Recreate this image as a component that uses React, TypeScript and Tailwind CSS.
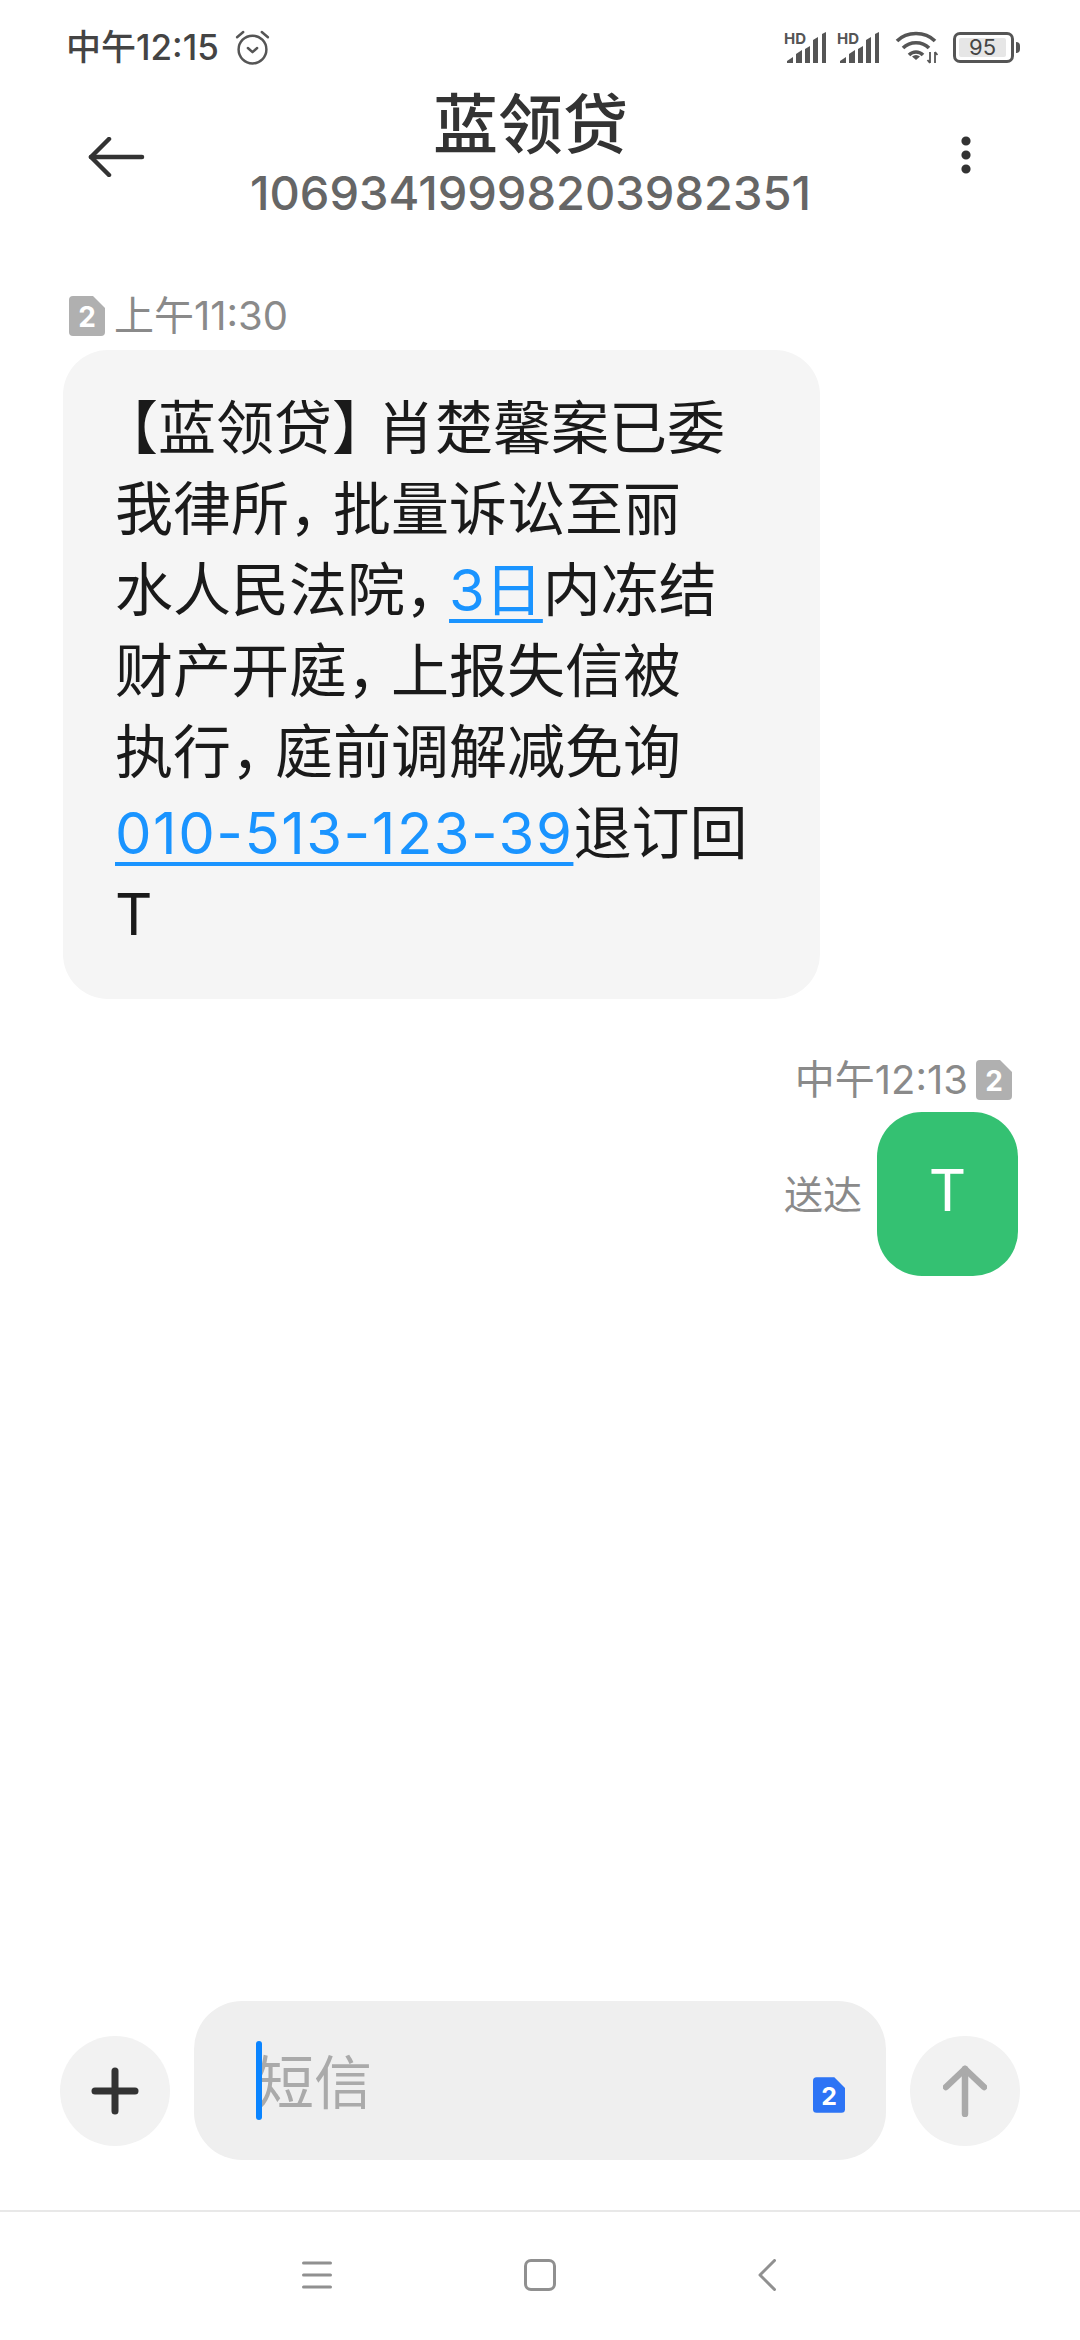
import { MoreVertical } from "lucide-react";

const FONT = "font-['Inter','Noto_Sans_CJK_SC',sans-serif]";

function SimIcon({ color, className }: { color: string; className: string }) {
  return (
    <svg viewBox="0 0 36 40" className={className}>
      <path
        d="M4 0H24L36 12V36a4 4 0 0 1-4 4H4a4 4 0 0 1-4-4V4a4 4 0 0 1 4-4Z"
        fill={color}
      />
      <text x="18" y="31" textAnchor="middle" fontSize="28" fontWeight="700" fill="#fff" fontFamily="Inter, sans-serif">
        2
      </text>
    </svg>
  );
}

function Signal() {
  return (
    <svg viewBox="0 0 41 31" className="h-[31px] w-[41px] overflow-visible">
      <text x="-1" y="12" fontSize="15" fontWeight="700" fill="#555" fontFamily="Inter, sans-serif">
        HD
      </text>
      <path d="M2 31V29L8 25V31Z M11 31V22L17 18V31Z M20 31V17L25 14V31Z M28 31V8L33 5V31Z M37 31V2L41 0V31Z" fill="#555" />
    </svg>
  );
}

function Wifi() {
  return (
    <svg viewBox="0 0 43 34" className="h-[34px] w-[43px]" fill="none" stroke="#555" strokeWidth="3.6">
      <path d="M2 11C12 1 30 1 40 11" />
      <path d="M8 18C15 11 27 11 34 18" />
      <path d="M14 25C18 21 24 21 28 25" />
      <path d="M21 30L17 26.500C19.500 24.500 22.500 24.500 25 26.500Z" fill="#555" stroke="none" />
      <path d="M35 22V33M32.500 30L35 33M40 33V22M40 22L42.500 25" strokeWidth="1.800" />
    </svg>
  );
}

function Battery() {
  return (
    <div className="flex items-center gap-[2px]">
      <div className="h-[31px] w-[61px] rounded-[7px] border-[3.5px] border-[#555] py-[3px] pl-[3px] pr-[5px]">
        <div className="flex h-full w-full items-center justify-center rounded-[2px] bg-[#e6e6e6] text-[22px] leading-none text-[#444]">
          95
        </div>
      </div>
      <div className="h-[11px] w-[4px] rounded-r-full bg-[#555]" />
    </div>
  );
}

function Alarm() {
  return (
    <svg viewBox="0 0 34 34" className="ml-[16px] h-[35px] w-[35px]" fill="none" stroke="#555" strokeWidth="2.400" strokeLinecap="round" strokeLinejoin="round">
      <circle cx="17" cy="19" r="13.500" />
      <path d="M12.500 17.500L17 21.500L21.500 17.500" />
      <path d="M2 7L8 2" />
      <path d="M32 7L26 2" />
    </svg>
  );
}

// the phone's font sets CJK punctuation narrower than a full em
const Comma = () => <span className="mr-[15px] [font-feature-settings:'halt']">，</span>;

export default function App() {
  return (
    <div className={`flex h-[2340px] w-[1080px] flex-col overflow-hidden bg-white ${FONT}`}>
      {/* Status bar */}
      <div className="flex h-[94px] shrink-0 items-center justify-between pl-[66px] pr-[60px]">
        <div className="flex items-center">
          <span className="text-[35px] font-medium leading-none text-[#444]">中午12:15</span>
          <Alarm />
        </div>
        <div className="flex items-center">
          <Signal />
          <div className="ml-[12px]">
            <Signal />
          </div>
          <div className="ml-[16px] mr-[15px]">
            <Wifi />
          </div>
          <Battery />
        </div>
      </div>

      {/* Header */}
      <div className="flex h-[122px] shrink-0 items-center justify-between pl-[88px] pr-[90px]">
        <svg viewBox="0 0 57 40" className="mt-[3px] h-[40px] w-[57px]" fill="none" stroke="#333" strokeWidth="4.500" strokeLinecap="round" strokeLinejoin="round">
          <path d="M3 20H54" />
          <path d="M21 2L3 20L21 38" />
        </svg>
        <div className="mr-[26px] flex flex-col items-center">
          <span className="mt-[-3px] text-[65px] font-medium leading-[72px] text-[#333]">蓝领贷</span>
          <span className="mt-[6px] text-[47px] font-medium leading-[52px] text-[#666]">10693419998203982351</span>
        </div>
        <MoreVertical className="size-[48px] fill-[#333] text-[#333]" strokeWidth={2.6} />
      </div>

      {/* Messages */}
      <div className="flex flex-1 flex-col pl-[63px] pr-[62px] pt-[80px]">
        <div className="flex items-center gap-[9px] pl-[6px]">
          <SimIcon color="#b0b0b0" className="h-[40px] w-[36px]" />
          <span className="text-[40px] leading-[40px] text-[#8a8a8a]">上午11:30</span>
        </div>
        <div className="mt-[14px] w-[757px] rounded-[45px] bg-[#f5f5f5] pb-[44px] pl-[52px] pt-[38px] text-[58px] leading-[81px] text-[#1a1a1a]">
          <p>
            <span className="ml-[14px] [font-feature-settings:'halt']">【</span>蓝领贷
            <span className="mr-[16px] [font-feature-settings:'halt']">】</span>肖楚馨案已委
          </p>
          <p>
            我律所<Comma />批量诉讼至丽
          </p>
          <p>
            水人民法院<Comma />
            <span className="text-[#1a94ff] underline decoration-[4px] underline-offset-[8px]">3日</span>内冻结
          </p>
          <p>
            财产开庭<Comma />上报失信被
          </p>
          <p>
            执行<Comma />庭前调解减免询
          </p>
          <p>
            <span className="tracking-[1.5px] text-[#1a94ff] underline decoration-[4px] underline-offset-[8px]">010-513-123-39</span>退订回
          </p>
          <p>T</p>
        </div>

        <div className="mt-[61px] flex items-center justify-end gap-[8px] pr-[6px]">
          <span className="text-[40px] leading-[40px] text-[#8a8a8a]">中午12:13</span>
          <SimIcon color="#b0b0b0" className="h-[40px] w-[36px]" />
        </div>
        <div className="mt-[12px] flex items-center justify-end gap-[15px]">
          <span className="text-[39px] leading-none text-[#8a8a8a]">送达</span>
          <div className="flex h-[164px] w-[141px] items-center justify-center rounded-[45px] bg-[#34c172] pb-[8px] text-[58px] leading-none text-white">
            T
          </div>
        </div>
      </div>

      {/* Input row */}
      <div className="flex shrink-0 items-end gap-[24px] pl-[60px]">
        <button className="mb-[14px] grid size-[110px] place-items-center rounded-full bg-[#f2f2f2]">
          <svg viewBox="0 0 48 48" className="size-[48px]" stroke="#333" strokeWidth="7" strokeLinecap="round">
            <path d="M24 4V44" />
            <path d="M4 24H44" />
          </svg>
        </button>
        <div className="relative flex h-[159px] w-[692px] items-center rounded-[48px] bg-[#efefef] pl-[62px] pt-[4px]">
          <div className="absolute left-[62px] top-[40px] h-[79px] w-[6px] rounded-full bg-[#0a84ff]" />
          <span className="text-[58px] leading-none text-[#aaa]">短信</span>
          <SimIcon color="#2d74f5" className="absolute left-[619px] top-[76px] h-[36px] w-[32px]" />
        </div>
        <button className="mb-[14px] grid size-[110px] place-items-center rounded-full bg-[#f2f2f2]">
          <svg viewBox="0 0 44 52" className="h-[52px] w-[44px]" fill="none" stroke="#aaa" strokeWidth="6.500" strokeLinecap="round" strokeLinejoin="round">
            <path d="M22 4V49" />
            <path d="M3 22L22 4L41 22" />
          </svg>
        </button>
      </div>

      {/* Nav bar */}
      <div className="mt-[50px] flex h-[130px] shrink-0 items-center border-t-2 border-[#e8e8e8] pb-[3px] pl-[302px]">
        <svg viewBox="0 0 30 28" className="h-[28px] w-[30px]" stroke="#909090" strokeWidth="3" strokeLinecap="round">
          <path d="M1.500 2H28.500" />
          <path d="M1.500 14H28.500" />
          <path d="M1.500 26H28.500" />
        </svg>
        <div className="ml-[192px] h-[32px] w-[32px] rounded-[7px] border-[3px] border-[#909090]" />
        <svg viewBox="0 0 18 32" className="ml-[202px] h-[32px] w-[18px]" fill="none" stroke="#909090" strokeWidth="3" strokeLinecap="round" strokeLinejoin="round">
          <path d="M16.500 1.500L2 16L16.500 30.500" />
        </svg>
      </div>
    </div>
  );
}
